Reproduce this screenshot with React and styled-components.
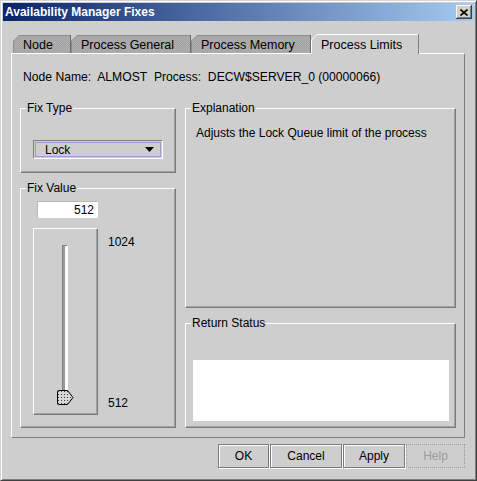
import styled, { createGlobalStyle } from "styled-components";

const GlobalStyle = createGlobalStyle`
  html, body { margin: 0; padding: 0; background: #cecece; }
  body { font-family: "Liberation Sans", Arial, sans-serif; font-size: 12px; color: #000; }
`;

const TABS = [
  { label: "Node", width: 58 },
  { label: "Process General", width: 120 },
  { label: "Process Memory", width: 120 },
  { label: "Process Limits", width: 108, active: true },
];

const BUTTONS = [
  { label: "OK", width: 51 },
  { label: "Cancel", width: 72 },
  { label: "Apply", width: 62 },
  { label: "Help", width: 59, disabled: true },
];

export default function App() {
  return (
    <>
      <GlobalStyle />
      <Window>
        <TitleBar>
          <span>Availability Manager Fixes</span>
          <CloseButton aria-label="Close">
            <svg width="8" height="7" viewBox="0 0 8 7">
              <path d="M0.5 0.5 L7.5 6.5 M7.5 0.5 L0.5 6.5" stroke="#000" strokeWidth="1.6" />
            </svg>
          </CloseButton>
        </TitleBar>

        <Body>
          <TabRow>
            {TABS.map((t) => (
              <Tab key={t.label} $width={t.width} $active={t.active}>
                <TabFace $active={t.active}>{t.label}</TabFace>
              </Tab>
            ))}
          </TabRow>

          <Panel>
            <Info>Node Name:&nbsp; ALMOST&nbsp; Process:&nbsp; DECW$SERVER_0 (00000066)</Info>

            <Columns>
              <Column>
                <Group $height={65}>
                  <Legend>Fix Type</Legend>
                  <Combo>
                    <ComboInner>
                      <span>Lock</span>
                      <svg width="9" height="5" viewBox="0 0 9 5">
                        <polygon points="0,0 9,0 4.5,5" fill="#000" />
                      </svg>
                    </ComboInner>
                  </Combo>
                </Group>

                <Group $height={240}>
                  <Legend>Fix Value</Legend>
                  <ValueField>512</ValueField>
                  <SliderRow>
                    <SliderBox>
                      <Track />
                      <Thumb>
                        <svg width="17" height="15" viewBox="0 0 17 15">
                          <defs>
                            <pattern id="dots" width="3" height="3" patternUnits="userSpaceOnUse">
                              <rect width="3" height="3" fill="#d8d8d8" />
                              <rect x="1" y="1" width="1" height="1" fill="#404040" />
                            </pattern>
                          </defs>
                          <path d="M1.5 0.5 H10.5 L16 7.5 L10.5 14.5 H1.5 Q0.5 14.5 0.5 13.5 V1.5 Q0.5 0.5 1.5 0.5 Z" fill="url(#dots)" stroke="#000" />
                        </svg>
                      </Thumb>
                    </SliderBox>
                    <Ticks>
                      <span>1024</span>
                      <span>512</span>
                    </Ticks>
                  </SliderRow>
                </Group>
              </Column>

              <Column>
                <Group $height={200}>
                  <Legend>Explanation</Legend>
                  <Explanation>Adjusts the Lock Queue limit of the process</Explanation>
                </Group>
                <Group $height={105}>
                  <Legend>Return Status</Legend>
                  <StatusArea />
                </Group>
              </Column>
            </Columns>
          </Panel>

          <ButtonRow>
            {BUTTONS.map((b) => (
              <Button key={b.label} $width={b.width} disabled={b.disabled}>
                {b.label}
              </Button>
            ))}
          </ButtonRow>
        </Body>
      </Window>
    </>
  );
}

const Window = styled.div`
  width: 477px;
  height: 481px;
  box-sizing: border-box;
  border: 1px solid;
  border-color: #d4d4d4 #404040 #404040 #d4d4d4;
  box-shadow: inset 1px 1px 0 #fff, inset -1px -1px 0 #808080;
  padding: 2px;
  background: #cecece;
  display: flex;
  flex-direction: column;
`;

const TitleBar = styled.div`
  height: 18px;
  display: flex;
  align-items: center;
  justify-content: space-between;
  padding: 0 2px 0 2px;
  background: linear-gradient(to right, #0a246a, #a6caf0);
  color: #fff;
  font-weight: bold;
  font-size: 12px;
`;

const CloseButton = styled.button`
  width: 16px;
  height: 14px;
  padding: 0;
  display: flex;
  align-items: center;
  justify-content: center;
  background: #d4d0c8;
  border: none;
  box-shadow: inset -1px -1px 0 #404040, inset 1px 1px 0 #fff, inset -2px -2px 0 #808080;
`;

const Body = styled.div`
  flex: 1;
  display: flex;
  flex-direction: column;
  padding: 13px 9px 0 8px;
`;

const TabRow = styled.div`
  display: flex;
  align-items: flex-end;
  height: 20px;
  padding-left: 2px;
  margin-bottom: -1px;
  position: relative;
  z-index: 1;
`;

const Tab = styled.div`
  width: ${({ $width }) => $width}px;
  height: ${({ $active }) => ($active ? 20 : 18)}px;
  margin-bottom: ${({ $active }) => ($active ? 0 : 1)}px;
  box-sizing: border-box;
  padding: 1px 1px 0 1px;
  background: ${({ $active }) =>
    $active
      ? "linear-gradient(to left, #808080 1px, #fff 1px)"
      : "linear-gradient(to left, #6a6a6a 1px, #8c8c8c 1px)"};
  clip-path: polygon(0 6px, 6px 0, 100% 0, 100% 100%, 0 100%);
  display: flex;
`;

const TabFace = styled.div`
  flex: 1;
  display: flex;
  align-items: center;
  padding-left: 9px;
  clip-path: polygon(0 5px, 5px 0, 100% 0, 100% 100%, 0 100%);
  background: ${({ $active }) =>
    $active ? "#cecece" : "repeating-conic-gradient(#a2a2a2 0 25%, #b0b0b0 0 50%) 0 0 / 2px 2px"};
  font-size: 12.5px;
  white-space: nowrap;
`;

const Panel = styled.div`
  border: 1px solid;
  border-color: #fff #808080 #808080 #fff;
  padding: 16px 8px 9px 8px;
`;

const Info = styled.div`
  height: 14px;
  line-height: 14px;
  margin-left: 3px;
  font-size: 12.15px;
  white-space: nowrap;
`;

const Columns = styled.div`
  display: grid;
  grid-template-columns: 156px 271px;
  column-gap: 9px;
  margin-top: 24px;
`;

const Column = styled.div`
  display: flex;
  flex-direction: column;
  gap: 15px;
`;

const Group = styled.div`
  position: relative;
  height: ${({ $height }) => $height}px;
  box-sizing: border-box;
  border: 1px solid;
  border-color: #fff #7a7a7a #7a7a7a #fff;
  box-shadow: inset -1px -1px 0 #a4a4a4;
  display: flex;
  flex-direction: column;
`;

const Legend = styled.span`
  position: absolute;
  top: -8px;
  left: 5px;
  padding: 0 1px;
  background: #cecece;
  line-height: 14px;
  white-space: nowrap;
`;

const Combo = styled.div`
  width: 130px;
  height: 19px;
  box-sizing: border-box;
  margin: 31px 0 0 12px;
  border: 1px solid;
  border-color: #808080 #fff #fff #808080;
  padding: 1px;
  display: flex;
`;

const ComboInner = styled.div`
  flex: 1;
  border: 1px solid #9c9cd6;
  display: flex;
  align-items: center;
  justify-content: space-between;
  padding: 0 6px 0 9px;
`;

const ValueField = styled.div`
  width: 61px;
  height: 17px;
  box-sizing: border-box;
  margin: 12px 0 0 16px;
  background: #fff;
  border-top: 1px solid #b8b8b8;
  border-left: 1px solid #b8b8b8;
  text-align: right;
  padding-right: 4px;
  line-height: 16px;
`;

const SliderRow = styled.div`
  display: flex;
  margin: 10px 0 0 12px;
`;

const SliderBox = styled.div`
  position: relative;
  width: 65px;
  height: 187px;
  box-sizing: border-box;
  border: 1px solid;
  border-color: #fff #7a7a7a #7a7a7a #fff;
  box-shadow: inset -1px -1px 0 #a4a4a4;
  padding: 16px 0 0 28px;
`;

const Track = styled.div`
  width: 6px;
  height: 154px;
  box-sizing: border-box;
  border: 1px solid #808080;
  border-right-color: #fff;
  background: linear-gradient(to right, #9a9a9a 2px, #fff 2px);
`;

const Thumb = styled.div`
  position: absolute;
  left: 23px;
  top: 161px;
  width: 17px;
  height: 15px;
  svg { display: block; }
`;

const Ticks = styled.div`
  display: flex;
  flex-direction: column;
  justify-content: space-between;
  padding: 7px 0 5px 10px;
  line-height: 14px;
`;

const Explanation = styled.div`
  margin: 17px 0 0 10px;
  line-height: 14px;
  white-space: nowrap;
`;

const StatusArea = styled.div`
  height: 61px;
  margin: 36px 6px 0 7px;
  background: #fff;
`;

const ButtonRow = styled.div`
  display: flex;
  justify-content: flex-end;
  gap: 1px;
  margin-top: 6px;
`;

const Button = styled.button`
  width: ${({ $width }) => $width}px;
  height: 24px;
  box-sizing: border-box;
  padding: 0;
  font-family: "Liberation Sans", Arial, sans-serif;
  font-size: 12px;
  background: #cecece;
  color: #000;
  border: 1px solid #7a7a7a;
  box-shadow: inset 1px 1px 0 #fff, 1px 1px 0 #fff;

  &:disabled {
    color: #9a9a9a;
    border: 1px dotted #9a9a9a;
    box-shadow: none;
  }
`;
